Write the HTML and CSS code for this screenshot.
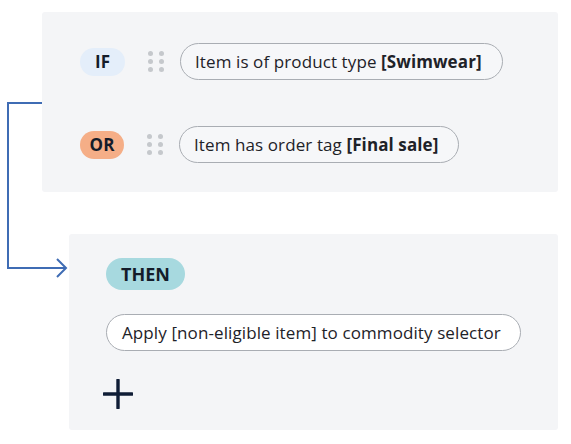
FILE: index.html
```html
<!DOCTYPE html>
<html>
<head>
<meta charset="utf-8">
<link rel="stylesheet" href="styles.css">
</head>
<body>
<div class="canvas">
  <svg class="connector" width="80" height="290" viewBox="0 0 80 290">
    <path d="M42 103 H8 V268 H66" fill="none" stroke="#3f6cb4" stroke-width="2"/>
    <path d="M57 259 L66 268 L57 277" fill="none" stroke="#3f6cb4" stroke-width="2" stroke-linejoin="miter"/>
  </svg>
  <section class="panel panel-if">
    <div class="rule-row">
      <span class="badge badge-if">IF</span>
      <span class="handle"><i></i><i></i><i></i><i></i><i></i><i></i></span>
      <span class="pill">Item is of product type <b>[Swimwear]</b></span>
    </div>
    <div class="rule-row">
      <span class="badge badge-or">OR</span>
      <span class="handle"><i></i><i></i><i></i><i></i><i></i><i></i></span>
      <span class="pill">Item has order tag <b>[Final sale]</b></span>
    </div>
  </section>
  <section class="panel panel-then">
    <span class="badge badge-then">THEN</span>
    <span class="pill pill-white">Apply [non-eligible item] to commodity selector</span>
    <svg class="plus" width="30" height="30" viewBox="0 0 30 30">
      <path d="M15 1 V29 M1 15 H29" stroke="#0f1d36" stroke-width="3.4" stroke-linecap="round"/>
    </svg>
  </section>
</div>
</body>
</html>
```
FILE: styles.css
```css
* { box-sizing: border-box; }
html, body { margin: 0; padding: 0; background: #ffffff; }
body {
  font-family: "Open Sans", "Noto Sans", sans-serif;
  color: #1e2228;
  width: 571px;
  height: 444px;
  overflow: hidden;
}
.canvas {
  position: relative;
  display: flex;
  flex-direction: column;
  padding-top: 12px;
}
.connector {
  position: absolute;
  left: 0;
  top: 0;
}
.panel {
  background: #f4f5f7;
  border-radius: 3px;
}
.panel-if {
  margin-left: 42px;
  width: 516px;
  height: 180px;
  padding: 31px 0 0 38px;
  display: flex;
  flex-direction: column;
  gap: 46px;
}
.rule-row {
  display: flex;
  align-items: center;
  height: 37px;
}
.badge {
  display: inline-flex;
  align-items: center;
  justify-content: center;
  font-weight: 700;
  font-size: 17px;
  border-radius: 14px;
  color: #141c2a;
}
.badge-if { width: 45px; height: 28px; background: #e4eefa; }
.badge-or { width: 44px; height: 28px; background: #f5ae87; }
.badge-then {
  width: 79px;
  height: 32px;
  border-radius: 16px;
  background: #a7d9df;
  font-size: 18px;
}
.handle {
  display: grid;
  grid-template-columns: 5px 5px;
  grid-template-rows: 5px 5px 5px;
  column-gap: 6px;
  row-gap: 3px;
  margin-left: 23px;
  margin-right: 16px;
}
.handle i {
  display: block;
  width: 5px;
  height: 5px;
  border-radius: 50%;
  background: #c5c8cc;
}
.pill {
  display: inline-flex;
  align-items: center;
  height: 37px;
  padding: 0 20px 0 14px;
  border: 1px solid #a9adb3;
  border-radius: 19px;
  background: #f6f7f9;
  font-size: 17px;
  letter-spacing: 0.1px;
  white-space: pre;
}
.pill b { font-weight: 700; }
.panel-then {
  margin-top: 42px;
  margin-left: 69px;
  width: 489px;
  height: 196px;
  padding: 24px 0 0 37px;
  display: flex;
  flex-direction: column;
  align-items: flex-start;
}
.pill-white {
  margin-top: 24px;
  background: #ffffff;
  padding: 0 19px 0 15px;
}
.plus {
  margin-top: 28px;
  margin-left: -3px;
}
```
